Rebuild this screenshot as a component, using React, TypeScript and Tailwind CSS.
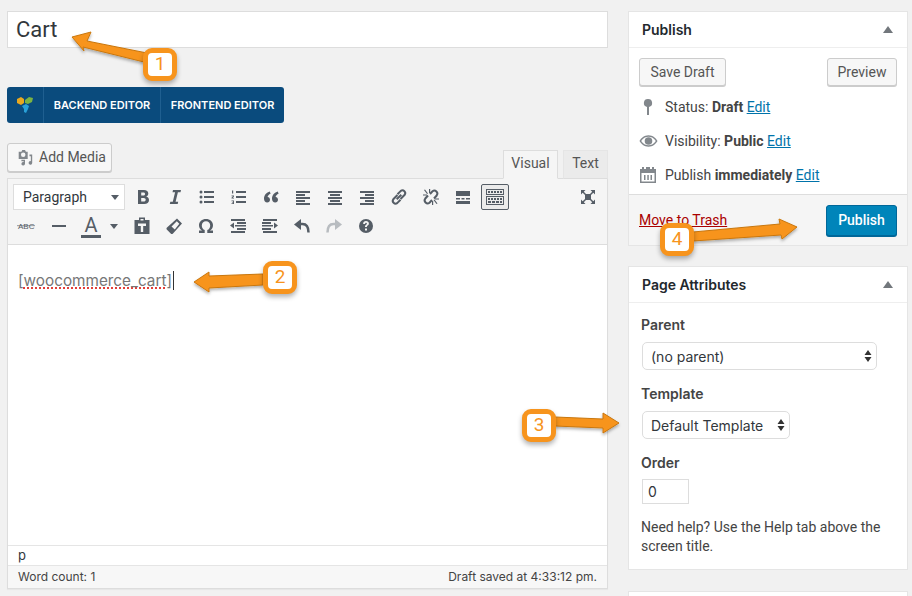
import type { ReactNode } from 'react';

const INTER = 'font-["Inter",sans-serif]';

function Glyph({ children, size = 20 }: { children: ReactNode; size?: number }) {
  return (
    <svg width={size} height={size} viewBox="0 0 20 20" fill="#555d66">
      {children}
    </svg>
  );
}

function ToolButton({ children, className = 'w-8' }: { children: ReactNode; className?: string }) {
  return <div className={`h-[26px] flex items-center justify-center shrink-0 ${className}`}>{children}</div>;
}

const lines = (rows: [number, number, number][]) =>
  rows.map(([x, y, w]) => <rect key={`${x}-${y}`} x={x} y={y} width={w} height="2" />);

const toolbarOne: ReactNode[] = [
  <path d="M5 3h6c2.600 0 4.300 1.300 4.300 3.500 0 1.500-.8 2.600-2.100 3.100 1.700.4 2.800 1.700 2.800 3.500 0 2.500-1.900 3.900-4.700 3.900H5zm3.200 2.500v3h2.200c1 0 1.700-.6 1.700-1.500s-.7-1.500-1.700-1.500zm0 5.400v3.600h2.500c1.200 0 2-.7 2-1.800s-.8-1.800-2-1.800z" />,
  <path d="M8 3h8l-.5 2.200h-2.600l-2.300 9.600h2.600L12.700 17H4.800l.5-2.200h2.500l2.300-9.600H7.500z" />,
  <>
    <circle cx="4" cy="5" r="1.500" />
    <circle cx="4" cy="10" r="1.500" />
    <circle cx="4" cy="15" r="1.500" />
    {lines([[7, 4, 10], [7, 9, 10], [7, 14, 10]])}
  </>,
  <>
    <path d="M3 3.500h1.200v3H3zM2.500 8.500h2.500v1l-1.300 1.300h1.300v.7H2.500v-.8l1.500-1.400H2.500zM2.500 13.500H5v3.500H2.500v-.7h1.600v-.7H3v-.6h1.100v-.8H2.500z" />
    {lines([[7, 4, 10], [7, 9, 10], [7, 14, 10]])}
  </>,
  <path d="M8.800 4.500C5.600 5.600 3 8 3 11.700 3 14 4.400 15.500 6.200 15.500c1.700 0 2.800-1.200 2.800-2.800 0-1.500-1-2.600-2.400-2.700.2-1.400 1.300-2.600 3-3.300zM16.800 4.500c-3.200 1.100-5.800 3.500-5.800 7.200 0 2.300 1.400 3.800 3.200 3.800 1.700 0 2.800-1.200 2.800-2.800 0-1.500-1-2.600-2.400-2.700.2-1.400 1.300-2.600 3-3.300z" />,
  <>{lines([[3, 4, 14], [3, 7, 9], [3, 10, 14], [3, 13, 9], [3, 16, 14]])}</>,
  <>{lines([[3, 4, 14], [5, 7, 10], [3, 10, 14], [5, 13, 10], [3, 16, 14]])}</>,
  <>{lines([[3, 4, 14], [8, 7, 9], [3, 10, 14], [8, 13, 9], [3, 16, 14]])}</>,
  <g fill="none" stroke="#555d66" strokeWidth="2">
    <path d="M8.500 8 4.300 12.200a2.800 2.800 0 0 0 3.900 3.900l3.300-3.300" />
    <path d="M11.500 12l4.200-4.200a2.800 2.800 0 0 0-3.900-3.900L8.500 7.200" />
    <path d="M7.700 12.300l4.600-4.600" />
  </g>,
  <>
    <g fill="none" stroke="#555d66" strokeWidth="2">
      <path d="M7 8.500 4.300 11.500a3 3 0 0 0 4.200 4.200L11 13" />
      <path d="M13 11.500l2.700-3a3 3 0 0 0-4.200-4.200L9 7" />
    </g>
    <path d="M3 3l1-.6 3 4-1 .6zM8 2h1.200v4H8zM2 7.500h4v1H2zM16.500 16.500l-1 .6-3-4 1-.6zM11 14h1.200v4H11zM14 11.500h4v1h-4z" />
  </>,
  <>
    <path d="M3 4h14v5H3zM3 11h4v1.500H3zM8.500 11h3v1.500h-3zM13 11h4v1.500h-4zM3 14h14v3H3z" />
  </>,
];

const kitchenSink = (
  <svg width="20" height="18" viewBox="0 0 20 18" fill="none" stroke="#555d66">
    <rect x="1.500" y="1.500" width="17" height="5" />
    <rect x="1.500" y="8.500" width="17" height="8" />
    <path d="M3 4h14" strokeWidth="2" strokeDasharray="2 1" />
    <path d="M3 11h14" strokeWidth="2" strokeDasharray="2 1" />
    <path d="M3 14h14" strokeWidth="2" strokeDasharray="3 1" />
  </svg>
);

const toolbarTwoRight: ReactNode[] = [
  <path d="M7 1.500h6V4h4.500v14h-15V4H7zM8.500 3v1.500h3V3zM6 7.500V10h2.800v6h2.400v-6H14V7.500z" />,
  <path fillRule="evenodd" d="M13 2.500 18 7.500 9 17.500c-.7.700-1.600.700-2.300 0L3 13.800c-.7-.7-.7-1.600 0-2.300zM12.800 5.200 7.500 10.500 10.800 13.500 15.300 7.800z" />,
  <path d="M10 3c4 0 7 2.600 7 6.200 0 2.400-1.300 4.300-3.200 5.300H17V17h-5.700v-3c1.800-.7 2.900-2.500 2.900-4.600 0-2.500-1.700-4.200-4.200-4.200S5.800 6.900 5.800 9.400c0 2.100 1.100 3.900 2.900 4.600v3H3v-2.500h3.200C4.300 13.500 3 11.600 3 9.200 3 5.600 6 3 10 3z" />,
  <>
    <path d="M2 9.500 6 6.500v6zM7 9h11v1.500H7z" />
    {lines([[3, 3, 14], [9, 6, 9], [9, 12, 9], [3, 15, 14]])}
  </>,
  <>
    <path d="M18 9.500l-4-3v6zM2 9h11v1.500H2z" />
    {lines([[3, 3, 14], [2, 6, 9], [2, 12, 9], [3, 15, 14]])}
  </>,
  <>
    <path d="M9 3 2 8.500 9 14z" />
    <path d="M7 8h3.500c3.800 0 6 2.800 6 8.500" fill="none" stroke="#555d66" strokeWidth="2.500" />
  </>,
  <>
    <path d="M11 3l7 5.500L11 14z" fill="#b8bcc0" />
    <path d="M13 8H9.500c-3.800 0-6 2.800-6 8.500" fill="none" stroke="#b8bcc0" strokeWidth="2.500" />
  </>,
  <path
    fillRule="evenodd"
    d="M10 3a7 7 0 1 1 0 14 7 7 0 0 1 0-14zM9 12.600v2h2v-2zM7.200 8h1.900c0-.8.300-1.200.9-1.200.5 0 .9.300.9.800 0 .5-.3.800-.8 1.100-.9.600-1.100 1.100-1.100 2.300h1.900c0-.7.200-1 .8-1.400.8-.5 1.200-1.200 1.200-2.100 0-1.600-1.200-2.500-2.900-2.500-1.800 0-2.800 1-2.800 2.500z"
  />,
];

function MetaRow({ icon, label, value }: { icon: ReactNode; label: string; value: string }) {
  return (
    <div className="h-[34px] flex items-center text-[14px] text-[#444]">
      <div className="w-[24px] mr-[5px] flex justify-center shrink-0">{icon}</div>
      <span>
        {label} <b className="font-bold">{value}</b>{' '}
        <span className="text-[#0073aa] underline">Edit</span>
      </span>
    </div>
  );
}

function Toggle() {
  return <div className="w-0 h-0 border-x-[5px] border-x-transparent border-b-[7px] border-b-[#72777c]" />;
}

function BoxHeader({ title }: { title: string }) {
  return (
    <div className="h-[36px] flex items-center justify-between pl-[13px] pr-[14px] border-b border-[#eee]">
      <span className={`text-[14px] font-semibold text-[#23282d] ${INTER}`}>{title}</span>
      <Toggle />
    </div>
  );
}

function FakeSelect({ label, className }: { label: string; className: string }) {
  return (
    <div
      className={`h-[28px] flex items-center justify-between pl-[8px] pr-[4px] bg-white border border-[#ddd] rounded-[5px] text-[14px] text-[#32373c] ${INTER} ${className}`}
    >
      <span>{label}</span>
      <svg width="8" height="14" viewBox="0 0 8 14" fill="#333">
        <path d="M4 1l3.500 5h-7zM4 13l3.500-5h-7z" />
      </svg>
    </div>
  );
}

function Callout({ n, className }: { n: number; className: string }) {
  return (
    <div
      className={`absolute w-[34px] h-[33px] flex items-center justify-center bg-white border-[5px] border-[#f7941d] rounded-[9px] text-[19px] text-[#f7941d] shadow-[0_3px_5px_rgba(0,0,0,0.3)] ${className}`}
    >
      {n}
    </div>
  );
}

export default function App() {
  return (
    <div className='relative w-[912px] h-[596px] overflow-hidden bg-[#f1f1f1] flex pl-[7px] pt-[11px] font-["Roboto",sans-serif]'>
      {/* Main column */}
      <div className="w-[601px] shrink-0 mr-[20px]">
        <div className="h-[37px] bg-white border border-[#ddd] pl-[8px] flex items-center text-[22px] text-[#32373c]">
          Cart
        </div>

        <div className={`mt-[39px] w-[277px] h-[36px] bg-[#0a4b7d] rounded-[3px] flex text-white text-[11px] font-semibold ${INTER}`}>
          <div className="w-[37px] flex items-center justify-center border-r border-[#1f5f90]">
            <svg width="18" height="18" viewBox="0 0 18 18">
              <path d="M1 3l4-2 3 2v4L5 9 1 7z" fill="#e9a820" />
              <path d="M9 4l4-3 4 1-1 4-4 2-3-1z" fill="#7cb342" />
              <path d="M6 10l4-2 3 2-1 3-2 4-2-1v-3z" fill="#29a0d8" />
            </svg>
          </div>
          <div className="w-[117px] flex items-center justify-center border-r border-[#1f5f90]">BACKEND EDITOR</div>
          <div className="flex-1 flex items-center justify-center">FRONTEND EDITOR</div>
        </div>

        <div className="mt-[20px] flex items-end justify-between h-[35px]">
          <div className="mb-[6px] w-[105px] h-[29px] flex items-center gap-[5px] pl-[8px] bg-[#f7f7f7] border border-[#ccc] rounded-[3px] shadow-[0_1px_0_#ccc] text-[14px] text-[#555]">
            <svg width="18" height="18" viewBox="0 0 20 20" fill="#82878c">
              <path d="M3 3h3l1-2h3l1 2h2v8H3zM8 9a2.500 2.500 0 1 0 0-5 2.500 2.500 0 0 0 0 5zM15 6h3v9.500a2 2 0 1 1-1.500-2V8H15zM6 12h4v4.500a2 2 0 1 1-1.500-2V13.500H6z" />
            </svg>
            Add Media
          </div>
          <div className="flex items-end text-[14px] relative z-10 -mb-px">
            <div className="w-[55px] h-[29px] pb-[3px] flex items-center justify-center bg-[#f5f5f5] border border-[#ddd] border-b-[#f5f5f5] text-[#555]">
              Visual
            </div>
            <div className="ml-[5px] w-[45px] h-[29px] pb-[3px] flex items-center justify-center bg-[#ebebeb] border border-[#e5e5e5] border-b-[#ddd] text-[#555]">
              Text
            </div>
          </div>
        </div>

        {/* Editor */}
        <div className="h-[411px] bg-white border border-[#ddd] flex flex-col shadow-[0_1px_1px_rgba(0,0,0,0.04)]">
          <div className="h-[66px] bg-[#f5f5f5] border-b border-[#ddd] pt-[5px] shrink-0">
            <div className="flex pl-[5px] pr-[3px] h-[26px]">
              <div className="w-[112px] shrink-0 mr-[2px] h-[26px] flex items-center justify-between pl-[9px] pr-[5px] bg-white border border-[#ddd] text-[14px] text-[#32373c]">
                Paragraph
                <div className="w-0 h-0 border-x-[4px] border-x-transparent border-t-[5px] border-t-[#555d66]" />
              </div>
              {toolbarOne.map((icon, i) => (
                <ToolButton key={i}>
                  <Glyph>{icon}</Glyph>
                </ToolButton>
              ))}
              <div className="w-[28px] h-[26px] ml-[2px] flex items-center justify-center bg-[#ebebeb] border border-[#555d66] rounded-[2px] shrink-0">
                {kitchenSink}
              </div>
              <div className="ml-auto w-8 flex items-center justify-center">
                <Glyph>
                  <path d="M3 3h4.500L5.800 4.700 8 7H12l2.200-2.300L12.500 3H17v4.500l-1.700-1.700L13 8v4l2.300 2.200 1.700-1.700V17h-4.500l1.700-1.700L12 13H8l-2.200 2.300L7.500 17H3v-4.500l1.700 1.700L7 12V8L4.700 5.800 3 7.500z" />
                </Glyph>
              </div>
            </div>
            <div className="flex pl-[3px] mt-[3px] h-[26px]">
              <ToolButton>
                <svg width="20" height="12" viewBox="0 0 20 12">
                  <text x="1" y="9" fontSize="8" fill="#555d66" fontFamily="Liberation Sans">ABC</text>
                  <rect x="0" y="5.500" width="18" height="0.600" fill="#555d66" />
                </svg>
              </ToolButton>
              <ToolButton>
                <Glyph>
                  <rect x="3" y="9" width="14" height="2" />
                </Glyph>
              </ToolButton>
              <ToolButton>
                <div className="flex flex-col items-center leading-none text-[20px] text-[#555d66]">
                  A
                  <div className="w-[20px] h-[3px] bg-[#555d66]" />
                </div>
              </ToolButton>
              <ToolButton className="w-[13px]">
                <div className="w-0 h-0 border-x-[4px] border-x-transparent border-t-[5px] border-t-[#555d66]" />
              </ToolButton>
              <div className="w-[6px] shrink-0" />
              {toolbarTwoRight.map((icon, i) => (
                <ToolButton key={i}>
                  <Glyph>{icon}</Glyph>
                </ToolButton>
              ))}
            </div>
          </div>

          <div className={`flex-1 pl-[10px] pt-[25px] text-[15.3px] text-[#777] ${INTER}`}>
            <span className="border-r border-[#333] pr-px">
              [<span className="underline decoration-dotted decoration-[#e2403a] decoration-2">woocommerce_cart</span>]
            </span>
          </div>

          <div className={`h-[20px] border-t border-[#e5e5e5] pl-[10px] flex items-center text-[13px] text-[#32373c] shrink-0 ${INTER}`}>
            p
          </div>
          <div className={`h-[23px] border-t border-[#e5e5e5] bg-[#f7f7f7] px-[10px] flex items-center justify-between text-[12px] text-[#444] shrink-0 ${INTER}`}>
            <span>Word count: 1</span>
            <span>Draft saved at 4:33:12 pm.</span>
          </div>
        </div>
      </div>

      {/* Sidebar */}
      <div className="w-[280px] shrink-0">
        <div className="bg-white border border-[#e5e5e5] h-[235px] flex flex-col">
          <BoxHeader title="Publish" />
          <div className="flex justify-between pt-[10px] pl-[10px] pr-[10px]">
            <div className="w-[87px] h-[28px] flex items-center justify-center bg-[#f7f7f7] border border-[#ccc] rounded-[3px] shadow-[0_1px_0_#ccc] text-[14px] text-[#555]">
              Save Draft
            </div>
            <div className="w-[70px] h-[28px] flex items-center justify-center bg-[#f7f7f7] border border-[#ccc] rounded-[3px] shadow-[0_1px_0_#ccc] text-[14px] text-[#555]">
              Preview
            </div>
          </div>
          <div className="pt-[4px] pl-[7px] flex-1">
            <MetaRow
              label="Status:"
              value="Draft"
              icon={
                <svg width="12" height="18" viewBox="0 0 12 18" fill="#82878c">
                  <path d="M6 1a4 4 0 0 1 1 7.900V17H5V8.900A4 4 0 0 1 6 1z" />
                </svg>
              }
            />
            <MetaRow
              label="Visibility:"
              value="Public"
              icon={
                <svg width="19" height="14" viewBox="0 0 20 14" fill="#82878c">
                  <path
                    fillRule="evenodd"
                    d="M10 1c4.500 0 7.800 3 9.500 6-1.700 3-5 6-9.500 6S2.200 10 .5 7C2.200 4 5.500 1 10 1zM10 2.500C7 2.500 4 4 2.300 7 4 10 7 11.500 10 11.500S16 10 17.700 7C16 4 13 2.500 10 2.500zM10 3a4 4 0 1 1 0 8 4 4 0 0 1 0-8z"
                  />
                </svg>
              }
            />
            <MetaRow
              label="Publish"
              value="immediately"
              icon={
                <svg width="18" height="18" viewBox="0 0 18 18" fill="#82878c">
                  <path
                    fillRule="evenodd"
                    d="M3 1h2v2h2V1h4v2h2V1h2v2h2v14H1V3h2zM2.500 7v8.500h13V7zM5 9h1.500v5H5zM8.300 9h1.500v5H8.300zM11.500 9H13v5h-1.500z"
                  />
                </svg>
              }
            />
          </div>
          <div className="h-[51px] bg-[#f5f5f5] border-t border-[#ddd] pl-[10px] pr-[10px] flex items-center justify-between shrink-0">
            <span className="text-[14px] text-[#a00] underline">Move to Trash</span>
            <div className="w-[71px] h-[31px] flex items-center justify-center bg-[#0085ba] border border-[#006799] rounded-[3px] shadow-[0_1px_0_#006799] text-[14px] font-medium text-white">
              Publish
            </div>
          </div>
        </div>

        <div className="mt-[20px] bg-white border border-[#e5e5e5] h-[304px]">
          <BoxHeader title="Page Attributes" />
          <div className="pl-[13px] pr-[10px] text-[14px] text-[#444]">
            <div className={`pt-[11px] h-[39px] -ml-px font-semibold ${INTER}`}>Parent</div>
            <FakeSelect label="(no parent)" className="w-[235px]" />
            <div className={`pt-[13px] h-[41px] -ml-px font-semibold ${INTER}`}>Template</div>
            <FakeSelect label="Default Template" className="w-[148px]" />
            <div className={`pt-[13px] h-[40px] -ml-px font-semibold ${INTER}`}>Order</div>
            <div className={`w-[47px] h-[25px] flex items-center pl-[5px] bg-white border border-[#ddd] text-[#32373c] ${INTER}`}>
              0
            </div>
            <p className="mt-[14px] -ml-px leading-[19px]">Need help? Use the Help tab above the screen title.</p>
          </div>
        </div>

        <div className="mt-[21px] bg-white border border-[#e5e5e5] h-[40px]" />
      </div>

      {/* Callout arrows */}
      <svg className="absolute inset-0 pointer-events-none" width="912" height="596" viewBox="0 0 912 596">
        <defs>
          <filter id="drop" x="-20%" y="-50%" width="140%" height="200%">
            <feDropShadow dx="0" dy="2" stdDeviation="1.500" floodColor="#000" floodOpacity="0.3" />
          </filter>
        </defs>
        <g fill="#f7941d" stroke="#c9770f" strokeWidth="1" filter="url(#drop)">
          <polygon points="72,37 91,32 87,41 147,53 144,62 83,47 84,51" />
          <polygon points="194,282 209,272 209,276 263,274 263,285 209,288 209,292" />
          <polygon points="619,423 603,413 603,419 555,417 555,426 603,428 603,433" />
          <polygon points="797,227 779,219 780,224 693,232 693,241 781,235 782,239" />
        </g>
      </svg>
      <Callout n={1} className="left-[143px] top-[48px]" />
      <Callout n={2} className="left-[263px] top-[261px]" />
      <Callout n={3} className="left-[522px] top-[409px]" />
      <Callout n={4} className="left-[660px] top-[223px]" />
    </div>
  );
}
